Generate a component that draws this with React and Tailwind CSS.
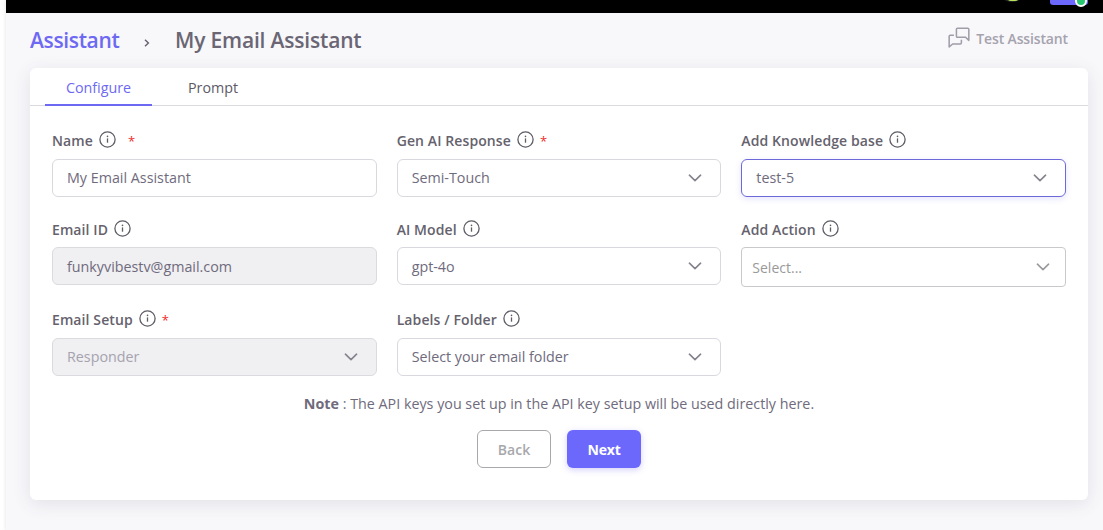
function InfoIcon() {
  return (
    <svg className="size-[17px] shrink-0 -translate-y-px" viewBox="0 0 17 17" fill="none">
      <circle cx="8.5" cy="8.5" r="7.6" stroke="#5f5c66" strokeWidth="1.3" />
      <path d="M8.5 7.4v4.3" stroke="#5f5c66" strokeWidth="1.3" />
      <circle cx="8.5" cy="5.4" r="0.8" fill="#5f5c66" />
    </svg>
  );
}

function Chevron({ className }) {
  return (
    <svg className={className} viewBox="0 0 14 8" fill="none">
      <path d="M1.4 1.2 7 6.6l5.6-5.4" stroke="currentColor" strokeWidth="1.6" strokeLinecap="round" strokeLinejoin="round" />
    </svg>
  );
}

function Field({ label, required = "", children, gap = "gap-2" }) {
  return (
    <div className={`flex flex-col ${gap}`}>
      <div className="flex h-[22px] items-center text-[14px] font-semibold text-[#65626d]">
        <span className="whitespace-nowrap tracking-[0.1px]">{label}</span>
        <span className="ml-1.5 flex">
          <InfoIcon />
        </span>
        {required && <span className={`translate-y-0.5 text-[13px] font-normal text-[#f02c2c] ${required}`}>*</span>}
      </div>
      {children}
    </div>
  );
}

function Box({ children, textClass = "", className = "border-[#d9d8de] text-[#6f6b7d]", select = false }) {
  return (
    <div className={`flex h-[38px] items-center justify-between rounded-md border pr-[18px] pl-3.5 text-[14.3px] ${className}`}>
      <span className={`whitespace-nowrap ${textClass}`}>{children}</span>
      {select && <Chevron className="h-[8px] w-[14px] text-[#85828e]" />}
    </div>
  );
}

export default function App() {
  return (
    <div className="flex h-[530px] w-[1103px] overflow-hidden bg-white font-['Open_Sans','Noto_Sans',sans-serif] text-[#6f6b7d]">
      <div className="w-1.5 shrink-0 bg-white" />
      <div className="flex min-w-0 flex-1 flex-col bg-[#f8f7fa] shadow-[0_0_4px_rgba(75,70,92,0.16)]">
        <div className="relative h-[13px] shrink-0 overflow-hidden bg-black">
          <div className="absolute top-[-28px] left-[991px] size-[30px] rounded-full border-2 border-[#26282a] bg-black" />
          <div className="absolute top-[-7px] left-[1001px] h-2 w-3 rounded-full bg-[#b9e55a]" />
          <div className="absolute top-[-20px] left-[1044px] h-[25px] w-[38px] rounded-[3px] bg-[#6b68fb]" />
          <div className="absolute top-[-5px] left-[1069px] size-3 rounded-full border-2 border-white bg-[#28c76f]" />
        </div>

        <header className="flex h-[55px] shrink-0 items-center pr-[35px] pl-6">
          <h1 className="flex items-center text-[21px] font-semibold">
            <span className="w-[89px] whitespace-nowrap tracking-[-0.35px] text-[#6d69f2]">Assistant</span>
            <svg className="mt-1 ml-[25px] h-2.5 w-[6px]" viewBox="0 0 6 10" fill="none">
              <path d="M1 1.8 4.4 5 1 8.2" stroke="#65616f" strokeWidth="1.4" />
            </svg>
            <span className="ml-[25px] whitespace-nowrap tracking-[-0.18px] text-[#6a6673]">My Email Assistant</span>
          </h1>
          <div className="ml-auto flex -translate-y-0.5 items-center text-[14px] font-semibold text-[#a5a3ae]">
            <svg className="mr-1.5 h-[21px] w-[22px] -translate-y-px" viewBox="0 0 23 22" fill="none" stroke="#a09da9" strokeWidth="1.6" strokeLinejoin="round">
              <path d="M10 1.2h10.6q1.2 0 1.2 1.2V14l-3.4-3.2H10q-1.2 0-1.2-1.2V2.4q0-1.2 1.2-1.2Z" />
              <path d="M6.2 8.6H2.4q-1.2 0-1.2 1.2V21l3.6-3.2h8q1.2 0 1.2-1.2v-3.2" />
            </svg>
            <span className="whitespace-nowrap tracking-[-0.14px]">Test Assistant</span>
          </div>
        </header>

        <main className="mr-[15px] ml-6 flex h-[432px] flex-col rounded-md bg-white shadow-[0_4px_18px_rgba(75,70,92,0.12)]">
          <nav className="flex h-[38px] shrink-0 border-b border-[#dbdade] pl-[15px] text-[14.3px]">
            <div className="-mb-px flex h-[38px] w-[107px] items-center justify-center border-b-2 border-[#6d69f2] pt-1 text-[#6d69f2]">
              Configure
            </div>
            <div className="flex h-[38px] w-[122px] items-center justify-center pt-0.5 text-[#5d5a66]">Prompt</div>
          </nav>

          <div className="flex flex-col gap-[21px] px-[22px] pt-[23px]">
            <div className="grid grid-cols-3 items-start gap-x-5">
              <Field label="Name" required="ml-3">
                <Box>My Email Assistant</Box>
              </Field>
              <Field label="Gen AI Response" required="ml-1.5">
                <Box select>Semi-Touch</Box>
              </Field>
              <Field label="Add Knowledge base">
                <Box select className="border-[#6d69d8] text-[#6f6b7d] shadow-[0_2px_6px_rgba(115,103,240,0.18)]">
                  test-5
                </Box>
              </Field>
            </div>

            <div className="grid grid-cols-3 items-start gap-x-5">
              <Field label="Email ID" gap="gap-[7px]">
                <Box textClass="translate-y-px" className="border-[#dbdade] bg-[#f0eff2] text-[#6f6b7d]">
                  funkyvibestv@gmail.com
                </Box>
              </Field>
              <Field label="AI Model" gap="gap-[7px]">
                <Box textClass="translate-y-px" select>
                  gpt-4o
                </Box>
              </Field>
              <Field label="Add Action" gap="gap-[7px]">
                <div className="flex h-10 items-center justify-between rounded border border-[#c9c9cc] pr-[15px] pl-2.5 text-[14px] text-[#999]">
                  <span>Select...</span>
                  <Chevron className="h-[8px] w-[14px] text-[#9a9a9e]" />
                </div>
              </Field>
            </div>

            <div className="grid grid-cols-3 items-start gap-x-5">
              <Field label="Email Setup" required="ml-1.5">
                <Box select className="border-[#dbdade] bg-[#f0eff2] text-[#a5a3ae]">
                  Responder
                </Box>
              </Field>
              <Field label="Labels / Folder">
                <Box select>Select your email folder</Box>
              </Field>
            </div>
          </div>

          <p className="mt-[17px] h-[22px] text-center text-[14.3px] leading-[22px] whitespace-nowrap">
            <b className="font-bold">Note</b> : The API keys you set up in the API key setup will be used directly here.
          </p>

          <div className="mt-[15px] flex justify-center gap-4 text-[14px] font-semibold">
            <button className="h-[38px] w-[74px] rounded-md border border-[#a8a8ac] text-[#a8a8ac]">Back</button>
            <button className="h-[38px] w-[74px] rounded-md bg-[#6b68fb] font-bold tracking-[-0.2px] text-white shadow-[0_2px_6px_rgba(115,103,240,0.3)]">
              Next
            </button>
          </div>
        </main>
      </div>
    </div>
  );
}
